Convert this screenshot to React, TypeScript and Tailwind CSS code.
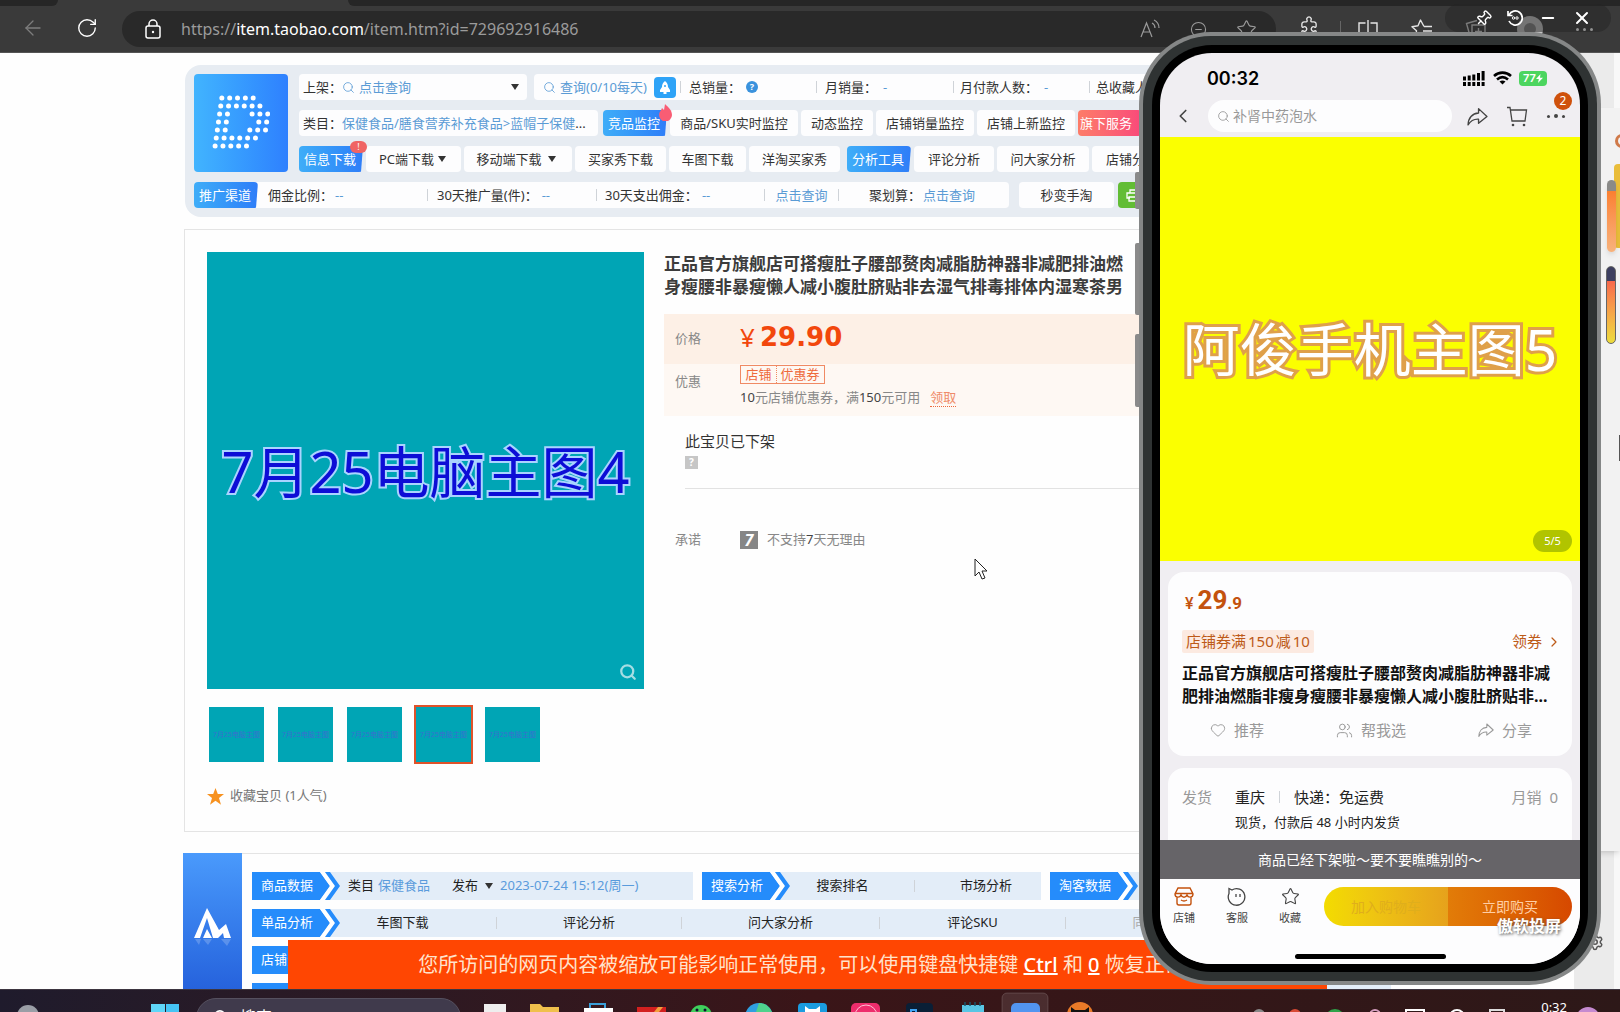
import type { ReactNode } from 'react'
import { clsx } from 'clsx'
import {
    ArrowLeft,
    ChevronLeft,
    ChevronRight,
    CircleMinus,
    Heart,
    Lock,
    Minus,
    Pin,
    Puzzle,
    RotateCw,
    Search,
    Settings,
    Star,
    Users,
    X,
} from 'lucide-react'

const thumbs = [1, 2, 3, 4, 5]

const dots = [
    [7, 0], [14, 0], [21, 0], [28, 0], [35, 0],
    [6, 8], [13, 8], [20, 8], [27, 8], [34, 8], [41, 8],
    [5, 16], [12, 16], [34, 16], [41, 16], [48, 16],
    [4, 24], [11, 24], [40, 24], [47, 24],
    [3, 32], [10, 32], [32, 32], [39, 32], [46, 32],
    [2, 40], [9, 40], [16, 40], [23, 40], [30, 40], [37, 40],
    [1, 48], [8, 48], [15, 48], [22, 48], [29, 48],
]

function Sep({ className }: { className?: string }) {
    return (
        <span
            className={clsx('w-px h-3 shrink-0 bg-[#cfd3d8]', className)}
        />
    )
}

function Caret() {
    return (
        <svg width="8" height="6" viewBox="0 0 8 6" className="shrink-0">
            <path d="M0 0h8L4 6z" fill="#333" />
        </svg>
    )
}

function Chip({
    className,
    children,
}: {
    className: string
    children: ReactNode
}) {
    return (
        <button
            className={clsx(
                'flex items-center justify-center gap-1 h-[26px] shrink-0 rounded-sm bg-[#fdfdfe]',
                className
            )}
        >
            {children}
        </button>
    )
}

function BlueTag({ children }: { children: ReactNode }) {
    return (
        <button className="h-[26px] w-16 shrink-0 pr-[2px] rounded-sm text-white bg-linear-to-r from-[#3fadf8] to-[#2f7df8] [clip-path:polygon(0_0,100%_0,calc(100%-2px)_100%,0_100%)]">
            {children}
        </button>
    )
}

function ArrowTag({ children }: { children: ReactNode }) {
    return (
        <div className="flex shrink-0">
            <button className="w-[68px] h-7 pl-[2px] bg-[#258cfb] text-white">
                {children}
            </button>
            <svg width="21" height="28" viewBox="0 0 21 28">
                <path d="M0 0 10 14 0 28z" fill="#258cfb" />
                <path d="M0 0h5l10 14L5 28H0l10-14z" fill="#fff" />
                <path d="M5 0h5l10 14-10 14H5l10-14z" fill="#258cfb" />
            </svg>
        </div>
    )
}

function ShareIcon({ size, color }: { size: number; color: string }) {
    return (
        <svg
            width={size}
            height={size}
            viewBox="0 0 20 20"
            fill="none"
            stroke={color}
            strokeWidth="1.3"
            strokeLinejoin="round"
        >
            <path d="M11 2.500 19 10l-8 6.500v-4C6.500 12.200 3.500 14 1 18c.2-6.500 4-11 10-11.300z" />
        </svg>
    )
}

function BrowserBar() {
    return (
        <header className="shrink-0 bg-[#3a3a3a] border-b border-[#555]">
            <div className="flex h-[6px]">
                <div className="w-[58px] rounded-br-md bg-[#262626]" />
                <div className="w-[290px]" />
                <div className="flex-1 rounded-bl-md bg-[#262626]" />
            </div>
            <div className="flex items-start h-[46px] pt-[5px] pl-2 pr-[9px]">
                <button
                    aria-label="后退"
                    className="flex items-center justify-center w-[50px] h-[34px] text-[#7d7d7d]"
                >
                    <ArrowLeft size={24} strokeWidth={1.3} />
                </button>
                <button
                    aria-label="刷新"
                    className="flex items-center justify-center w-[58px] h-[34px] text-white"
                >
                    <RotateCw size={22} strokeWidth={1.5} />
                </button>
                <div className="flex flex-1 items-center h-9 ml-[6px] pl-[22px] pr-[6px] rounded-full bg-[#292929] text-[#9b9b9b]">
                    <svg
                        width="18"
                        height="21"
                        viewBox="0 0 18 21"
                        fill="none"
                        stroke="#fff"
                        strokeWidth="1.500"
                    >
                        <rect x="2" y="7" width="14" height="12" rx="2" />
                        <path d="M5 7V5a4 4 0 0 1 8 0v2" />
                        <circle cx="9" cy="13" r="1.200" fill="#fff" stroke="none" />
                    </svg>
                    <p className="flex-1 ml-[19px] text-base leading-6">
                        https://<span className="text-white">item.taobao.com</span>
                        /item.htm?id=729692916486
                    </p>
                    <button
                        aria-label="朗读"
                        className="flex justify-center w-12"
                    >
                        <svg
                            width="20"
                            height="20"
                            viewBox="0 0 20 20"
                            fill="none"
                            stroke="currentColor"
                            strokeWidth="1.2"
                        >
                            <path d="M1 18 6.500 4 12 18M3 13h7M12 4c2 1 3 3 3 5M14 1c3 1.500 5 4 5 8" />
                        </svg>
                    </button>
                    <button
                        aria-label="缩放"
                        className="flex justify-center w-12"
                    >
                        <CircleMinus size={17} strokeWidth={1.5} />
                    </button>
                    <button
                        aria-label="收藏"
                        className="flex justify-center w-12"
                    >
                        <Star size={21} strokeWidth={1.3} />
                    </button>
                </div>
                <div className="flex items-center h-9 ml-[10px] text-[#e5e5e5]">
                    <button
                        aria-label="扩展"
                        className="flex justify-center w-[54px] pr-2"
                    >
                        <Puzzle
                            size={22}
                            strokeWidth={1.5}
                            className="-rotate-45"
                        />
                    </button>
                    <span className="w-px h-4 bg-[#666]" />
                    <button
                        aria-label="分屏"
                        className="flex justify-center w-[54px]"
                    >
                        <svg
                            width="20"
                            height="18"
                            viewBox="0 0 20 18"
                            fill="none"
                            stroke="currentColor"
                            strokeWidth="1.4"
                        >
                            <path d="M7.500 3H1v12h6.500M12.500 3H19v12h-6.500M10 0v18" />
                        </svg>
                    </button>
                    <button
                        aria-label="收藏夹"
                        className="flex justify-center w-[54px]"
                    >
                        <svg
                            width="22"
                            height="20"
                            viewBox="0 0 22 20"
                            fill="none"
                            stroke="currentColor"
                            strokeWidth="1.4"
                            strokeLinejoin="round"
                        >
                            <path d="M13 7.500 9.500 1 7 6.800 1 7.800l4.500 4L4.500 18l5-3M13 7.500h8M12 12h9" />
                        </svg>
                    </button>
                    <button
                        aria-label="集锦"
                        className="flex justify-center w-[54px] text-[#d0d0d0]"
                    >
                        <svg
                            width="22"
                            height="20"
                            viewBox="0 0 22 20"
                            fill="none"
                            stroke="currentColor"
                            strokeWidth="1.4"
                        >
                            <path d="M5 17 1.500 4.500 12 1.500M7 6h13v13H7zM13.500 9v7M10 12.500h7" />
                        </svg>
                    </button>
                    <button
                        aria-label="个人资料"
                        className="flex justify-center w-[54px]"
                    >
                        <span className="flex items-center justify-center size-[26px] rounded-full bg-[#c4c4c4]">
                            <span className="size-3 rounded-full bg-[#808080]" />
                        </span>
                    </button>
                    <button
                        aria-label="更多"
                        className="flex justify-center gap-1 w-[54px]"
                    >
                        <span className="size-[3px] rounded-full bg-white" />
                        <span className="size-[3px] rounded-full bg-white" />
                        <span className="size-[3px] rounded-full bg-white" />
                    </button>
                </div>
            </div>
        </header>
    )
}

function ToolPanel() {
    return (
        <section className="flex flex-col gap-[10px] ml-[2px] p-[9px] rounded-2xl bg-[#e7ecf2] text-[13px] leading-5 text-[#333] whitespace-nowrap overflow-hidden">
            <div className="flex gap-[11px]">
                <div className="flex items-center justify-center w-[94px] h-[98px] shrink-0 rounded-sm bg-linear-to-r from-[#42b4fe] to-[#2f80fe]">
                    <svg width="58" height="56" viewBox="-2 -3 58 56">
                        {dots.map(([x, y]) => (
                            <circle
                                key={`${x}-${y}`}
                                cx={x * 1.12}
                                cy={y}
                                r="2.500"
                                fill="#fff"
                            />
                        ))}
                    </svg>
                </div>
                <div className="flex flex-col gap-[10px]">
                    <div className="flex gap-[7px]">
                        <button className="flex items-center w-[228px] h-[26px] shrink-0 pl-1 pr-2 rounded-sm bg-[#fdfdfe] text-left">
                            上架：
                            <Search
                                size={13}
                                strokeWidth={1.5}
                                className="text-[#5a9bd5]"
                            />
                            <span className="flex-1 ml-1 text-[#5a9bd5]">
                                点击查询
                            </span>
                            <Caret />
                        </button>
                        <div className="flex items-center h-[26px] shrink-0 rounded-sm bg-[#fdfdfe]">
                            <div className="flex items-center w-[146px] pl-[9px] pr-1 text-[#5a9bd5]">
                                <Search size={13} strokeWidth={1.5} />
                                <a href="#query" className="flex-1 ml-1">
                                    查询(0/10每天)
                                </a>
                                <button
                                    aria-label="加速"
                                    className="flex items-center justify-center w-[22px] h-[21px] rounded-sm bg-[#2ea3f7]"
                                >
                                    <svg
                                        width="10"
                                        height="13"
                                        viewBox="0 0 10 13"
                                    >
                                        <path
                                            d="M5 0c2.500 2 3 4 3 6l2 3v2H6.500v2h-3v-2H0V9l2-3c0-2 .5-4 3-6z"
                                            fill="#fff"
                                        />
                                        <circle
                                            cx="5"
                                            cy="5"
                                            r="1"
                                            fill="#2ea3f7"
                                        />
                                    </svg>
                                </button>
                            </div>
                            <Sep />
                            <div className="flex items-center w-[135px] pl-2">
                                总销量：
                                <span className="flex items-center justify-center size-3 ml-[5px] rounded-full bg-[#3a92dd] text-[9px] font-bold text-white">
                                    ?
                                </span>
                            </div>
                            <Sep />
                            <div className="w-[136px] pl-2">
                                月销量：
                                <span className="ml-[6px] text-[#5a9bd5]">
                                    -
                                </span>
                            </div>
                            <Sep />
                            <div className="w-[135px] pl-[6px]">
                                月付款人数：
                                <span className="ml-[6px] text-[#5a9bd5]">
                                    -
                                </span>
                            </div>
                            <Sep />
                            <div className="w-[135px] pl-[6px]">
                                总收藏人气：
                            </div>
                        </div>
                    </div>
                    <div className="flex gap-[3px]">
                        <div className="flex items-center w-[299px] h-[26px] shrink-0 pl-1 rounded-sm bg-[#fdfdfe]">
                            类目：
                            <a href="#category" className="text-[#5a9bd5]">
                                保健食品/膳食营养补充食品&gt;蓝帽子保健
                            </a>
                            ...
                        </div>
                        <div className="relative ml-[2px]">
                            <BlueTag>竞品监控</BlueTag>
                            <svg
                                width="13"
                                height="17"
                                viewBox="0 0 13 17"
                                className="absolute -right-[5px] -top-[6px]"
                            >
                                <path
                                    d="M6 0c3 3 7 6 7 11a6 6 0 0 1-13 0c0-3 2-4 3-7l2 2z"
                                    fill="#f95d74"
                                />
                            </svg>
                        </div>
                        <Chip className="w-[128px]">商品/SKU实时监控</Chip>
                        <Chip className="w-[72px]">动态监控</Chip>
                        <Chip className="w-[98px]">店铺销量监控</Chip>
                        <Chip className="w-[98px]">店铺上新监控</Chip>
                        <button className="w-16 h-[26px] shrink-0 pr-2 rounded-sm bg-linear-to-r from-[#fd7c68] to-[#f9487a] text-white">
                            旗下服务
                        </button>
                    </div>
                    <div className="flex gap-[3px]">
                        <div className="relative">
                            <BlueTag>信息下载</BlueTag>
                            <span className="absolute -right-1 -top-[5px] w-[17px] h-3 rounded-full bg-[#f06464] text-center text-[9px] leading-3 text-white">
                                !
                            </span>
                        </div>
                        <Chip className="w-[95px] pr-[2px]">
                            PC端下载
                            <Caret />
                        </Chip>
                        <Chip className="w-[108px] pr-1">
                            移动端下载
                            <span className="pl-[2px]">
                                <Caret />
                            </span>
                        </Chip>
                        <Chip className="w-[91px]">买家秀下载</Chip>
                        <Chip className="w-[77px]">车图下载</Chip>
                        <Chip className="w-[91px] mr-1">洋淘买家秀</Chip>
                        <BlueTag>分析工具</BlueTag>
                        <Chip className="w-[80px]">评论分析</Chip>
                        <Chip className="w-[92px]">问大家分析</Chip>
                        <Chip className="w-[80px]">店铺分析</Chip>
                    </div>
                </div>
            </div>
            <div className="flex">
                <div className="flex items-center rounded-sm bg-[#fdfdfe]">
                    <BlueTag>推广渠道</BlueTag>
                    <div className="w-[169px] pl-[10px]">
                        佣金比例：
                        <span className="ml-[2px] text-[#5a9bd5]">--</span>
                    </div>
                    <Sep />
                    <div className="w-[168px] pl-[9px]">
                        30天推广量(件)：
                        <span className="ml-1 text-[#5a9bd5]">--</span>
                    </div>
                    <Sep />
                    <div className="w-[167px] pl-2">
                        30天支出佣金：
                        <span className="ml-1 text-[#5a9bd5]">--</span>
                    </div>
                    <Sep />
                    <a
                        href="#promo"
                        className="w-[73px] text-center text-[#5a9bd5]"
                    >
                        点击查询
                    </a>
                    <Sep />
                    <div className="w-[170px] pl-[30px]">
                        聚划算：
                        <a href="#juhuasuan" className="ml-[2px] text-[#5a9bd5]">
                            点击查询
                        </a>
                    </div>
                </div>
                <Chip className="w-[95px] ml-[10px]">秒变手淘</Chip>
                <button
                    aria-label="打印"
                    className="flex items-center w-[60px] h-[26px] ml-1 pl-2 shrink-0 rounded-sm bg-[#62bd35]"
                >
                    <svg
                        width="14"
                        height="14"
                        viewBox="0 0 14 14"
                        fill="none"
                        stroke="#fff"
                        strokeWidth="1.3"
                    >
                        <path d="M4 5V2h6v3M4 10H1V5h12v5h-3M3 9h8v4H3z" />
                    </svg>
                </button>
            </div>
        </section>
    )
}

function Product() {
    return (
        <section className="flex mt-3 ml-px pl-[22px] pt-[22px] pb-[25px] border border-[#e4e4e4] overflow-hidden">
            <div className="w-[437px] shrink-0">
                <div className="relative flex items-center justify-center aspect-square bg-[#00a5b5]">
                    <p className="text-[56px] leading-none whitespace-nowrap text-[#0d0dd6] [-webkit-text-stroke:4px_#a9d4ff] [paint-order:stroke_fill]">
                        7月25电脑主图4
                    </p>
                    <Search
                        size={18}
                        strokeWidth={3}
                        className="absolute right-[7px] bottom-2 text-[#a5dde3]"
                    />
                </div>
                <div className="flex gap-[10px] mt-4">
                    {thumbs.map((n) => (
                        <button
                            key={n}
                            className={clsx(
                                'flex items-center justify-center size-[59px] border-2 bg-[#00a5b5] bg-clip-padding text-[7px] leading-none text-[#3a6fd0] whitespace-nowrap',
                                n === 4
                                    ? 'border-[#e0522a]'
                                    : 'border-transparent'
                            )}
                        >
                            7月25电脑主图
                        </button>
                    ))}
                </div>
                <button className="flex items-center h-5 mt-[22px] text-[13px] text-[#777]">
                    <svg
                        width="17"
                        height="17"
                        viewBox="0 0 17 17"
                        className="mr-[6px]"
                    >
                        <path
                            d="m8.500 0 2.300 6H17l-5 4 2 6.800-5.500-4L3 16.800 5 10 0 6h6.200z"
                            fill="#f79220"
                        />
                    </svg>
                    收藏宝贝 (1人气)
                </button>
            </div>
            <div className="flex-1 ml-5 text-[13px] whitespace-nowrap text-[#888]">
                <h1 className="text-[17px] leading-[23px] font-bold text-[#3c3c3c]">
                    正品官方旗舰店可搭瘦肚子腰部赘肉减脂肪神器非减肥排油燃
                    <br />
                    身瘦腰非暴瘦懒人减小腹肚脐贴非去湿气排毒排体内湿寒茶男
                </h1>
                <div className="flex items-center h-[50px] mt-4 pl-[11px] bg-[#fdf0e6]">
                    <p className="w-[65px]">价格</p>
                    <p className="flex items-center h-[30px] mb-1 text-[26px] leading-[30px] text-[#f2470c]">
                        <span className="w-5">¥</span>
                        <span className="font-['DejaVu_Sans'] font-bold">
                            29.90
                        </span>
                    </p>
                </div>
                <div className="flex h-[52px] pl-[11px] bg-[#fef8f3]">
                    <p className="w-[65px] pt-2">优惠</p>
                    <div>
                        <div className="flex w-[85px] h-[19px] mt-px items-center justify-center border border-[#f08a64] text-[#ee6a3c]">
                            <span className="pr-1">店铺</span>
                            <span className="pl-1 border-l border-dotted border-[#f08a64] leading-[17px]">
                                优惠券
                            </span>
                        </div>
                        <p className="leading-5 mt-[3px]">
                            <span className="text-[#444]">10</span>
                            元店铺优惠券，满
                            <span className="text-[#444]">150</span>元可用
                            <a
                                href="#coupon"
                                className="ml-[10px] border-b border-dotted border-[#ee6a3c] text-[#ef8b68]"
                            >
                                领取
                            </a>
                        </p>
                    </div>
                </div>
                <div className="ml-[21px]">
                    <h2 className="mt-[15px] text-[15px] leading-5 text-[#333]">
                        此宝贝已下架
                    </h2>
                    <button className="block size-[13px] mt-[5px] bg-[#c6c6c6] text-[10px] leading-[13px] font-bold text-white">
                        ?
                    </button>
                    <hr className="mt-[19px] border-[#e2e2e2]" />
                </div>
                <div className="flex items-center mt-[41px] pl-[11px]">
                    <p className="w-[65px]">承诺</p>
                    <span className="flex items-center justify-center size-[18px] mr-[9px] bg-[#868686] text-base leading-none font-bold italic text-white">
                        7
                    </span>
                    <p>
                        不支持<span className="text-[#444]">7</span>天无理由
                    </p>
                </div>
            </div>
        </section>
    )
}

function DataPanel() {
    return (
        <section className="flex mt-[21px] text-[13px] text-[#222] whitespace-nowrap overflow-hidden">
            <div className="flex justify-center w-[59px] h-[180px] shrink-0 pt-[55px] bg-linear-to-b from-[#4a9afc] to-[#1e4fd2]">
                <svg width="38" height="40" viewBox="0 0 38 40">
                    <path
                        d="M0 30 13 0l12 22 7-6 5 14h-7l-1-5-5 5h-5L13 10 6 30zM9 30l4-9 5 9z"
                        fill="#fff"
                    />
                    <path
                        d="M1 31h6l-2 6zM9 31h9l-4 6zM27 31h10l-4 7z"
                        fill="#fff"
                        opacity=".2"
                    />
                </svg>
            </div>
            <div className="flex flex-1 flex-col gap-[9px] pt-[18px] pl-[10px] border-t border-[#e4e4e4]">
                <div className="flex gap-[9px]">
                    <div className="flex items-center w-[441px] shrink-0 bg-[#e3edf8]">
                        <ArrowTag>商品数据</ArrowTag>
                        <span className="ml-[7px]">类目</span>
                        <a href="#food" className="ml-1 text-[#5a9bdc]">
                            保健食品
                        </a>
                        <button className="flex items-center gap-[7px] ml-[22px]">
                            发布
                            <Caret />
                        </button>
                        <span className="ml-[7px] text-[#5a9bdc]">
                            2023-07-24 15:12(周一)
                        </span>
                    </div>
                    <div className="flex items-center w-[339px] shrink-0 bg-[#e3edf8]">
                        <ArrowTag>搜索分析</ArrowTag>
                        <button className="w-[123px] pr-5">搜索排名</button>
                        <Sep />
                        <button className="flex-1 pl-4">市场分析</button>
                    </div>
                    <div className="w-[339px] shrink-0 bg-[#e3edf8]">
                        <ArrowTag>淘客数据</ArrowTag>
                    </div>
                </div>
                <div className="flex items-center w-[1139px] bg-[#e3edf8]">
                    <ArrowTag>单品分析</ArrowTag>
                    <button className="w-[155px] pr-8">车图下载</button>
                    <Sep />
                    <button className="w-[184px]">评论分析</button>
                    <Sep />
                    <button className="w-[197px]">问大家分析</button>
                    <Sep />
                    <button className="w-[185px]">评论SKU</button>
                    <Sep />
                    <button className="w-[185px] text-[#aaa]">同款分析</button>
                </div>
                <div className="flex w-[1139px] bg-[#e3edf8]">
                    <ArrowTag>店铺分析</ArrowTag>
                </div>
                <div className="flex w-[1139px] bg-[#e3edf8]">
                    <ArrowTag>店铺工具</ArrowTag>
                </div>
            </div>
        </section>
    )
}

function Phone() {
    return (
        <div className="absolute top-8 right-[19px] w-[462px] z-10">
            <span className="absolute -left-1 top-[140px] w-1 h-[37px] rounded-l-xs bg-[#8a8a8a]" />
            <span className="absolute -left-1 top-[211px] w-1 h-[72px] rounded-l-xs bg-[#8a8a8a]" />
            <span className="absolute -left-1 top-[302px] w-1 h-[73px] rounded-l-xs bg-[#8a8a8a]" />
            <div className="p-1 rounded-[72px] bg-[#858787]">
                <div className="p-[9px] rounded-[68px] bg-[#2f3333]">
                    <div className="p-2 rounded-[60px] bg-black">
                        <PhoneScreen />
                    </div>
                </div>
            </div>
        </div>
    )
}

function PhoneScreen() {
    return (
        <div className="rounded-[52px] overflow-hidden bg-[#f0eef2] text-[15px] whitespace-nowrap">
            <div className="flex items-center h-[34px] mt-2 pl-[47px] pr-[33px]">
                <p className="flex-1 font-['Inter'] text-[18px] font-semibold text-black">
                    00:32
                </p>
                <svg width="22" height="15" viewBox="0 0 22 15">
                    <path
                        d="M0 11h3v4H0zM4.700 11h3v4h-3zM9.300 11h3v4h-3zM14 11h3v4h-3zM18.600 11h3v4h-3zM0 5.500h3v4H0zM4.700 4.500h3v5h-3zM9.300 3.500h3v6h-3zM14 2h3v7.500h-3zM18.600 0h3v9.500h-3z"
                        fill="#000"
                    />
                </svg>
                <svg
                    width="19"
                    height="14"
                    viewBox="0 0 19 14"
                    className="ml-2"
                    fill="none"
                    stroke="#000"
                    strokeWidth="2.600"
                >
                    <path d="M1 5c5-4.500 12-4.500 17 0M4 8.500c3.500-3 7.500-3 11 0" />
                    <path d="M6.500 10.500c2-1.500 4-1.500 6 0l-3 3z" fill="#000" stroke="none" />
                </svg>
                <span className="flex items-center justify-center w-7 h-[15px] ml-[7px] rounded-sm bg-[#4cd55f] font-['Inter'] text-[11px] font-semibold text-white">
                    77
                    <svg width="7" height="9" viewBox="0 0 7 9">
                        <path d="M4.500 0 0 5h2.800L2 9l5-5.200H4z" fill="#fff" />
                    </svg>
                </span>
            </div>
            <div className="flex items-center h-[42px] pl-3 pr-[15px] text-[#444]">
                <button aria-label="返回" className="mr-[14px]">
                    <ChevronLeft size={22} strokeWidth={1.8} />
                </button>
                <label className="flex flex-1 items-center h-8 pl-[9px] rounded-full bg-[#fdfdfe]">
                    <Search
                        size={13}
                        strokeWidth={1.6}
                        className="text-[#999]"
                    />
                    <input
                        aria-label="搜索"
                        placeholder="补肾中药泡水"
                        className="flex-1 min-w-0 ml-[3px] text-sm outline-none placeholder:text-[#999]"
                    />
                </label>
                <button aria-label="分享" className="ml-[15px]">
                    <ShareIcon size={21} color="#444" />
                </button>
                <button aria-label="购物车" className="ml-[19px]">
                    <svg
                        width="21"
                        height="21"
                        viewBox="0 0 21 21"
                        fill="none"
                        stroke="#444"
                        strokeWidth="1.3"
                    >
                        <path d="M0 1.500h3L5 15h13l1.500-11H3.500" />
                        <circle cx="6" cy="19" r="1.300" fill="#444" stroke="none" />
                        <circle cx="17" cy="19" r="1.300" fill="#444" stroke="none" />
                    </svg>
                </button>
                <button
                    aria-label="更多"
                    className="relative flex items-center gap-1 ml-[19px]"
                >
                    <span className="size-[3px] rounded-full bg-[#444]" />
                    <span className="size-1 rounded-full bg-[#444]" />
                    <span className="size-[3px] rounded-full bg-[#444]" />
                    <span className="absolute -right-[7px] bottom-2 size-[18px] rounded-full bg-[#cf510c] text-xs leading-[18px] text-white">
                        2
                    </span>
                </button>
            </div>
            <div className="relative flex items-center justify-center h-[424px] bg-[#fbff00]">
                <p className="text-[57px] leading-none text-white [-webkit-text-stroke:6px_#dfa04a] [paint-order:stroke_fill]">
                    阿俊手机主图5
                </p>
                <span className="absolute right-2 bottom-[9px] w-[39px] h-[22px] rounded-full bg-[#b1c400] text-center text-[11px] leading-[22px] text-white">
                    5/5
                </span>
            </div>
            <div className="px-2">
                <section className="mt-[11px] px-[14px] pt-[14px] pb-[14px] rounded-2xl bg-[#fdfdfe]">
                    <p className="flex items-baseline h-[31px] pl-[3px] font-['Roboto'] leading-7 text-[#c3520e]">
                        <span className="mr-1 text-base font-medium">¥</span>
                        <span className="text-[26px] font-bold">29</span>
                        <span className="text-[17px] font-bold">.9</span>
                    </p>
                    <div className="flex items-center justify-between mt-[13px] text-[#bd5a18]">
                        <span className="h-[23px] px-1 rounded-xs bg-[#fceae1] leading-[23px]">
                            店铺券满<span className="mx-[2px]">150</span>减
                            <span className="ml-[2px]">10</span>
                        </span>
                        <button className="flex items-center gap-1">
                            领券
                            <ChevronRight
                                size={16}
                                strokeWidth={1.8}
                                className="-mr-1"
                            />
                        </button>
                    </div>
                    <h2 className="mt-[9px] text-base leading-[23px] font-bold text-[#111]">
                        正品官方旗舰店可搭瘦肚子腰部赘肉减脂肪神器非减
                        <br />
                        肥排油燃脂非瘦身瘦腰非暴瘦懒人减小腹肚脐贴非...
                    </h2>
                    <div className="flex justify-between h-6 mt-[10px] pl-7 pr-[26px] text-[#999]">
                        <button className="flex items-center gap-2">
                            <Heart size={16} strokeWidth={1.4} />
                            推荐
                        </button>
                        <button className="flex items-center gap-2">
                            <Users size={17} strokeWidth={1.4} />
                            帮我选
                        </button>
                        <button className="flex items-center gap-2">
                            <ShareIcon size={16} color="#999" />
                            分享
                        </button>
                    </div>
                </section>
                <section className="h-[72px] mt-3 px-[14px] pt-[17px] rounded-t-2xl bg-[#fdfdfe] text-[#222]">
                    <div className="flex items-center h-6">
                        <span className="w-[53px] text-[#999]">发货</span>
                        <span>重庆</span>
                        <Sep className="mx-[14px]" />
                        <span className="flex-1">快递：免运费</span>
                        <span className="text-[#999]">月销&nbsp; 0</span>
                    </div>
                    <p className="ml-[53px] text-[13px] leading-[26px]">
                        现货，付款后 48 小时内发货
                    </p>
                </section>
            </div>
            <p className="h-[39px] bg-[#666468] text-center text-sm leading-[39px] text-white">
                商品已经下架啦～要不要瞧瞧别的～
            </p>
            <div className="flex relative h-[75px] pl-[2px] pr-2 pt-2 bg-[#fdfdfe] text-[11px] leading-4 text-[#444]">
                <button className="flex flex-col items-center gap-1 w-11">
                    <svg
                        width="20"
                        height="19"
                        viewBox="0 0 20 19"
                        fill="none"
                        stroke="#c3520e"
                        strokeWidth="1.4"
                    >
                        <path d="M4 1h12l3 6c0 4-5 4-6 1-1 3-5 3-6 0-1 3-6 3-6-1zM1.500 6.500h17M3 10v6q0 2 2 2h10q2 0 2-2v-6M7 13q3 2 6 0" />
                    </svg>
                    店铺
                </button>
                <button className="flex flex-col items-center gap-1 w-[62px]">
                    <svg
                        width="20"
                        height="19"
                        viewBox="0 0 20 19"
                        fill="none"
                        stroke="#444"
                        strokeWidth="1.3"
                    >
                        <path d="M2 1.500 5 3a8.300 8.300 0 1 1-3 3.500zM9 7v3M13 7v3" />
                    </svg>
                    客服
                </button>
                <button className="flex flex-col items-center gap-1 w-11">
                    <Star size={19} strokeWidth={1.4} />
                    收藏
                </button>
                <div className="flex flex-1 h-[39px] ml-3 rounded-full overflow-hidden text-sm">
                    <button className="flex-1 bg-linear-to-r from-[#f3dc00] to-[#e6a21c] text-[#dfae1c]">
                        加入购物车
                    </button>
                    <button className="flex-1 bg-linear-to-r from-[#e27c08] to-[#d64800] text-[#ffcfa6]">
                        立即购买
                    </button>
                </div>
                <span className="absolute right-[19px] top-[37px] text-base leading-5 font-bold text-white [text-shadow:1px_1px_3px_#555]">
                    傲软投屏
                </span>
            </div>
            <div className="h-[10px] bg-[#fdfdfe]">
                <div className="w-[151px] h-[5px] mx-auto rounded-full bg-black" />
            </div>
        </div>
    )
}

function SideRail() {
    return (
        <aside className="absolute inset-y-0 right-0 w-[46px] bg-[#ebebeb] border-r-[6px] border-[#f8f8f8]">
            <Settings
                size={18}
                className="absolute right-[10px] bottom-[38px] text-[#555]"
            />
            <div className="absolute -right-[6px] top-[55px] w-8 h-[743px] bg-[#f2f2f2] shadow-md">
                <span className="absolute -right-[9px] top-[26px] size-[14px] rounded-full border-[3px] border-[#d07a4a]" />
                <span className="absolute right-0 top-14 w-[6px] h-[84px] rounded-l-sm bg-[#e9bd3a]" />
                <span className="absolute right-1 top-[72px] w-[9px] h-[72px] rounded-full bg-linear-to-b from-[#8a8a88] from-15% via-[#fb8030] via-16% to-[#f7b27c] shadow-md" />
                <span className="absolute right-1 top-[158px] w-[10px] h-[78px] rounded-full border border-[#666] bg-linear-to-b from-[#3d3f60] from-18% via-[#f7684c] via-19% to-[#ecdc3c]" />
                <span className="absolute right-0 top-[327px] w-px h-[26px] bg-[#555]" />
            </div>
        </aside>
    )
}

function CastControls() {
    return (
        <div className="absolute top-1 right-[9px] z-20 flex items-center justify-between w-[166px] h-7 pl-[30px] pr-[19px] rounded-full bg-[#232323]/50 text-white">
            <button aria-label="置顶">
                <Pin size={17} strokeWidth={2} className="rotate-45" />
            </button>
            <button aria-label="旋转">
                <svg
                    width="16"
                    height="16"
                    viewBox="0 0 16 16"
                    fill="none"
                    stroke="#fff"
                    strokeWidth="1.700"
                >
                    <path d="M2 5a7 7 0 1 1 0 6M1 1v4.500h4.500" />
                    <circle cx="6.500" cy="8" r="1.200" strokeWidth="1" />
                    <circle cx="10" cy="8" r="1.200" strokeWidth="1" />
                </svg>
            </button>
            <button aria-label="最小化">
                <Minus size={18} strokeWidth={2.5} />
            </button>
            <button aria-label="关闭">
                <X size={20} strokeWidth={2.4} />
            </button>
        </div>
    )
}

function Taskbar() {
    return (
        <footer className="flex items-start h-[23px] shrink-0 overflow-hidden border-t border-[#3d3540] bg-linear-to-r from-[#1f1b2c] via-[#3a1518] to-[#2d1818] text-white">
            <span className="size-[22px] mt-[15px] ml-[17px] shrink-0 rounded-full bg-[#9a9ea6]" />
            <button
                aria-label="开始"
                className="grid grid-cols-2 gap-px w-7 h-7 mt-[14px] ml-[112px] shrink-0"
            >
                <span className="bg-[#5fd6f8]" />
                <span className="bg-[#45c4f4]" />
                <span className="bg-[#45c4f4]" />
                <span className="bg-[#2fb2f0]" />
            </button>
            <button className="flex items-start w-[265px] h-10 mt-2 ml-[17px] pl-4 pt-[10px] shrink-0 rounded-full border border-[#55505f] bg-[#403a4c] text-left text-base leading-4">
                <Search size={15} strokeWidth={2.5} className="mr-3" />
                搜索
            </button>
            <svg
                width="640"
                height="22"
                viewBox="470 990 640 22"
                className="ml-[9px] shrink-0"
            >
                <path d="M484 1004h22v8h-22z" fill="#eee" />
                <path d="M530 1004h10l3 3h16v5h-29z" fill="#f0c04c" />
                <path d="M590 1008v-4h15v4" fill="none" stroke="#3b9fd8" strokeWidth="2" />
                <path d="M584 1008h29v4h-29z" fill="#fff" />
                <path d="M637 1007h29v5h-29z" fill="#d3201f" />
                <path d="m654 1012 4-5h5l-4 5z" fill="#f3a03c" />
                <circle cx="701" cy="1016" r="11" fill="#3fd05c" />
                <circle cx="697" cy="1010" r="1.500" fill="#113" />
                <circle cx="705" cy="1010" r="1.500" fill="#113" />
                <circle cx="759" cy="1017" r="14" fill="#2f9fe0" />
                <path d="M759 1003a14 14 0 0 1 13 9h-16z" fill="#4fd28c" />
                <rect x="798" y="1003" width="29" height="20" rx="4" fill="#1a9ce0" />
                <path d="M805 1006l4 3h7l4-3v6h-15z" fill="#fff" />
                <rect x="851" y="1003" width="29" height="20" rx="5" fill="#ee2d6c" />
                <circle cx="866" cy="1016" r="11" fill="none" stroke="#ffc0d4" />
                <rect x="906" y="1003" width="27" height="20" rx="4" fill="#0a1f36" />
                <path d="M911 1012v-2h5v2" fill="none" stroke="#3fa4f5" strokeWidth="2" />
                <path d="M962 1005h22v7h-22z" fill="#58c6e4" />
                <path d="M965 1002v4M970 1002v4M975 1002v4M980 1002v4" stroke="#1a5468" strokeWidth="1.500" />
                <rect x="1002" y="993" width="46" height="30" rx="5" fill="#fff" fillOpacity=".1" stroke="#fff" strokeOpacity=".15" />
                <rect x="1011" y="1003" width="29" height="20" rx="5" fill="#5295f0" />
                <circle cx="1080" cy="1015" r="13" fill="#e97a28" />
                <path d="M1071 1007l4 3h10l4-3v5h-18z" fill="#111" />
            </svg>
            <div className="flex flex-1 items-start justify-end gap-6 pt-[19px] pr-9">
                <span className="size-3 rounded-full bg-[#888]" />
                <span className="size-3 rounded-full bg-[#d84a35]" />
                <span className="size-5 rounded-full bg-[#2fa34a]" />
                <span className="size-3 rounded-full border-2 border-[#d6a0c0]" />
                <span className="w-5 h-4 border-2 border-white" />
                <span className="size-4 rounded-full border-2 border-white" />
                <span className="w-4 h-4 border-2 border-[#ddd]" />
            </div>
            <time className="mt-[9px] mr-[9px] text-[13px] leading-4">0:32</time>
            <span className="size-6 mt-[17px] mr-5 rounded-full bg-[#c58ad0]" />
        </footer>
    )
}

export default function App() {
    return (
        <div className="relative flex flex-col h-screen overflow-hidden bg-[#fefefe] font-['Noto_Sans','Noto_Sans_CJK_SC',sans-serif]">
            <BrowserBar />
            <main className="relative flex-1 min-h-0 overflow-hidden pt-3 pl-[183px] pr-[80px]">
                <ToolPanel />
                <Product />
                <DataPanel />
                <SideRail />
                <div className="absolute bottom-0 left-[288px] right-[293px] h-[49px] pl-2 bg-[#ff4602] text-center text-[20px] leading-[49px] text-[#ffe3cc] whitespace-nowrap">
                    您所访问的网页内容被缩放可能影响正常使用，可以使用键盘快捷键{' '}
                    <b className="font-medium underline text-white">Ctrl</b> 和{' '}
                    <b className="font-medium underline text-white">0</b>{' '}
                    恢复正常。
                </div>
                <svg
                    width="14"
                    height="22"
                    viewBox="0 0 14 22"
                    className="absolute left-[974px] top-[505px]"
                >
                    <path
                        d="M1 1v17l4-4 3 7 3-1-3-7h5z"
                        fill="#fff"
                        stroke="#222"
                    />
                </svg>
            </main>
            <Taskbar />
            <Phone />
            <CastControls />
        </div>
    )
}
